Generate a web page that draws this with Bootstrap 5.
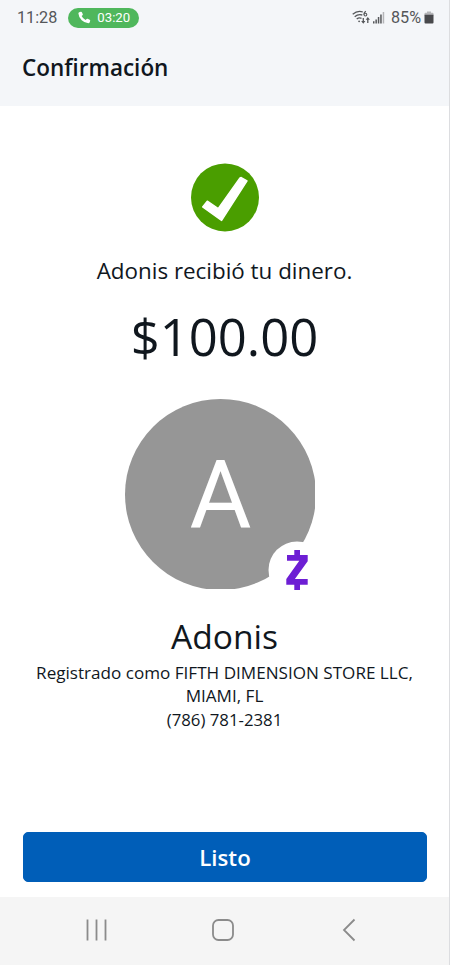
<!DOCTYPE html>
<html lang="es">
<head>
    <meta charset="UTF-8">
    <meta name="viewport" content="width=device-width, initial-scale=1.0">
    <title>Confirmación</title>

    <!-- Bootstrap CSS -->
    <link href="https://cdn.jsdelivr.net/npm/bootstrap@5.3.3/dist/css/bootstrap.min.css" rel="stylesheet">
    <script src="https://cdn.jsdelivr.net/npm/bootstrap@5.3.3/dist/js/bootstrap.bundle.min.js"></script>

    <style>
        body {
            font-family: "Open Sans", "Noto Sans", sans-serif;
            color: #10171e;
            background-color: #fff;
        }
        svg {
            display: block;
            flex-shrink: 0;
        }
        .screen {
            height: 965px;
            border-right: 1px solid #dcdde0;
            overflow: hidden;
        }
        .top-area {
            height: 106px;
            background-color: #f4f6f9;
        }
        .status-bar {
            height: 35px;
            padding: 0 15px 0 17px;
            font-family: Roboto, sans-serif;
            font-size: 16.2px;
            line-height: 20px;
            color: #55575a;
        }
        .call-pill {
            width: 71px;
            height: 20px;
            margin-left: 11px;
            padding-left: 10px;
            font-size: 13.2px;
            color: #fff;
            background-color: #4fb75c;
        }
        .call-time {
            margin-left: 6px;
        }
        .wifi-icon {
            margin-right: 3px;
        }
        .battery-level {
            margin-left: 6px;
            margin-right: 3px;
        }
        .page-title {
            padding-left: 22px;
            margin-top: 17px;
            font-size: 22.5px;
            line-height: 32px;
            font-weight: 600;
        }
        .check-icon {
            margin-top: 57px;
        }
        .message {
            margin-top: 23px;
            font-size: 22.4px;
            line-height: 32px;
        }
        .amount {
            margin-top: 16px;
            font-size: 50.8px;
            line-height: 68px;
        }
        .avatar {
            margin: 28px 9px 0 0;
        }
        .avatar text {
            font-family: Roboto, sans-serif;
            font-size: 95px;
        }
        .recipient {
            margin-top: 22px;
            font-size: 33.6px;
            line-height: 46px;
        }
        .details {
            margin-top: 2px;
            font-size: 17.1px;
            line-height: 23px;
        }
        .phone {
            margin-top: 1px;
            font-size: 16.8px;
        }
        .btn-done {
            --bs-btn-color: #fff;
            --bs-btn-bg: #005eb8;
            --bs-btn-border-color: #005eb8;
            --bs-btn-hover-color: #fff;
            --bs-btn-hover-bg: #00509d;
            height: 50px;
            margin: 0 22px 15px 23px;
            padding: 2px 0 0;
            font-size: 22.2px;
            font-weight: 600;
            border-radius: 5px;
        }
        .system-nav {
            height: 68px;
            background-color: #f5f5f5;
            padding: 0 93px 2px 85px;
        }
        .home-icon {
            margin-right: 5px;
        }
    </style>
</head>
<body>
    <div class="screen d-flex flex-column">
        <header class="top-area">
            <div class="status-bar d-flex align-items-center">
                <span>11:28</span>
                <div class="call-pill rounded-pill d-flex align-items-center">
                    <svg width="13" height="13" viewBox="0 0 13 13" fill="#fff">
                        <path d="M1.2 1.3 2.8.7q.8-.2 1.1.5l.9 2q.2.6-.3 1l-.9.8Q4.800 7.500 7.600 9l1-1q.5-.5 1.100-.2l2 .9q.7.400.5 1.100l-.5 1.500q-.3.900-1.200.9Q6.700 12.200 3.700 9.300T.4 2.500q0-.9.8-1.200z"/>
                    </svg>
                    <span class="call-time">03:20</span>
                </div>
                <div class="ms-auto d-flex align-items-center">
                    <!-- Wi-Fi 6 -->
                    <svg class="wifi-icon" width="18" height="15" viewBox="0 0 18 15" fill="none" stroke="#55575a" stroke-width="1.3">
                        <path d="M.7 4.200Q5.500.2 10.800 2M2.700 6.700Q6 3.900 10.300 5M4.700 9.100Q7 7.200 9.500 8.300"/>
                        <circle cx="7.1" cy="11.3" r=".9" fill="#55575a" stroke="none"/>
                        <path d="M14 1.400Q11.900 2 11.900 4.400" stroke-width="1.1"/>
                        <circle cx="13.4" cy="4.6" r="1.4" stroke-width="1.1"/>
                        <path d="M11.300 8v4.500M15.800 13V8.500"/>
                        <path d="M9.200 11h4.200l-2.100 2.800zM13.700 9.800h4.200L15.800 7z" fill="#55575a" stroke="none"/>
                    </svg>
                    <!-- Signal -->
                    <svg width="12" height="13" viewBox="0 0 12 13" fill="#55575a">
                        <path d="M0 10.300h1.500V12.500H0zM2.400 8.500h1.500v4H2.400zM4.800 6h1.500v6.500H4.800zM7.200 3.500h1.500v9H7.200z"/>
                        <path d="M9.700 1h1.500v11.500H9.700z" fill="#b4b5b8"/>
                    </svg>
                    <span class="battery-level">85%</span>
                    <!-- Battery -->
                    <svg width="10" height="14" viewBox="0 0 10 14">
                        <path d="M3 .5h4v1.200h1.500q1 0 1 1V4.500h-9V2.700q0-1 1-1H3z" fill="#b4b5b8"/>
                        <path d="M.5 3.800h9v7.700q0 1-1 1h-7q-1 0-1-1z" fill="#48494c"/>
                    </svg>
                </div>
            </div>
            <h1 class="page-title mb-0">Confirmación</h1>
        </header>

        <main class="flex-grow-1 d-flex flex-column align-items-center text-center">
            <svg class="check-icon" width="68" height="69" viewBox="0 0 68 69">
                <circle cx="34" cy="34.4" r="34" fill="#4a9e00"/>
                <path d="M50.200 14.600 56 17.900 30.600 57.400 11.700 43.900 16.300 38.200 27.200 45.600 49 14.900z" fill="#fff" stroke="#fff" stroke-width="1.5" stroke-linejoin="round"/>
            </svg>
            <p class="message mb-0">Adonis recibió tu dinero.</p>
            <div class="amount">$100.00</div>

            <svg class="avatar" width="190" height="192" viewBox="0 0 190 192">
                <circle cx="95.5" cy="95.5" r="95.5" fill="#969696"/>
                <path d="M70 190h120v2H70z" fill="#fff"/>
                <text x="95.5" y="129" text-anchor="middle" fill="#fff">A</text>
                <!-- Zelle badge -->
                <circle cx="172" cy="171" r="28.5" fill="#fff"/>
                <path d="M169.300 151h5.700v5h7.700v6.300l-12.800 17.700h12.800v5.700H175v5.300h-5.700v-5.300h-8v-5.700l13-18.200h-12.300v-5.800h7.300z" fill="#6d1ed4"/>
            </svg>

            <h2 class="recipient mb-0 fw-normal">Adonis</h2>
            <div class="details">
                <div>Registrado como FIFTH DIMENSION STORE LLC,<br>MIAMI, FL</div>
                <div class="phone">(786) 781-2381</div>
            </div>
        </main>

        <button type="button" class="btn btn-done">Listo</button>

        <nav class="system-nav d-flex align-items-center justify-content-between">
            <svg width="23" height="24" viewBox="0 0 23 24" stroke="#8b8b8b" stroke-width="1.8">
                <path d="M2.500 1.500v21M11.500 1.500v21M20.500 1.500v21"/>
            </svg>
            <svg class="home-icon" width="24" height="24" viewBox="0 0 24 24" fill="none" stroke="#8b8b8b" stroke-width="1.8">
                <rect x="2" y="2" width="20" height="20" rx="5.5"/>
            </svg>
            <svg width="14" height="24" viewBox="0 0 14 24" fill="none" stroke="#8b8b8b" stroke-width="1.8">
                <path d="M12.500 1.500 2 12l10.500 10.500"/>
            </svg>
        </nav>
    </div>
</body>
</html>
